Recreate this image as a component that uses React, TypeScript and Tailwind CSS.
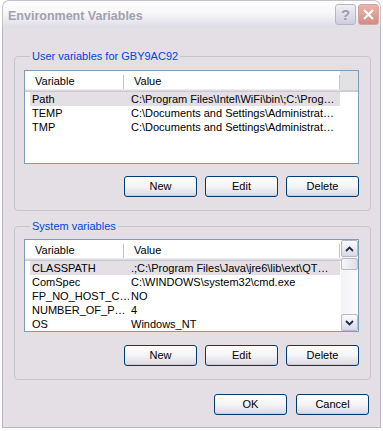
const userVars = [
  { name: "Path", value: "C:\\Program Files\\Intel\\WiFi\\bin\\;C:\\Prog…" },
  { name: "TEMP", value: "C:\\Documents and Settings\\Administrat…" },
  { name: "TMP", value: "C:\\Documents and Settings\\Administrat…" },
];

const systemVars = [
  { name: "CLASSPATH", value: ".;C:\\Program Files\\Java\\jre6\\lib\\ext\\QT…" },
  { name: "ComSpec", value: "C:\\WINDOWS\\system32\\cmd.exe" },
  { name: "FP_NO_HOST_C…", value: "NO" },
  { name: "NUMBER_OF_P…", value: "4" },
  { name: "OS", value: "Windows_NT" },
];

function XpButton({ label }: { label: string }) {
  return (
    <button
      type="button"
      className="h-[21px] w-[73px] rounded-[3px] border border-[#003c74] bg-linear-to-b from-white via-[#f4f3f6] to-[#dcd9e2] text-[11px] leading-none text-black shadow-[inset_0_-1px_0_#cdcad6]"
    >
      {label}
    </button>
  );
}

function Header({ filler }: { filler: boolean }) {
  return (
    <div className="flex h-[21px] items-center bg-white shadow-[inset_0_-1px_0_#cbc8cf,inset_0_-2px_0_#dddae1,inset_0_-3px_0_#eeecf0]">
      <div className="w-[98px] pl-[10px]">Variable</div>
      <div className="h-[14px] w-px bg-[#c6c3cb]" />
      <div className="w-[215px] pl-[10px]">Value</div>
      <div className="h-[14px] w-px bg-[#c6c3cb]" />
      {filler ? (
        <div className="h-full w-[18px] bg-[#e2e1e4] shadow-[inset_0_-2px_0_#cfcdd3]" />
      ) : null}
    </div>
  );
}

function Rows({ items }: { items: { name: string; value: string }[] }) {
  return (
    <div className="flex flex-col">
      {items.map((v, i) => (
        <div
          key={v.name}
          className={
            "ml-[5px] flex h-[14px] w-[310px] items-center whitespace-nowrap " +
            (i === 0 ? "bg-[#e3dfe5]" : "")
          }
        >
          <div className="w-[99px] overflow-hidden pl-[2px]">{v.name}</div>
          <div className="flex-1 overflow-hidden pl-[2px]">{v.value}</div>
        </div>
      ))}
    </div>
  );
}

function Chevron({ up }: { up: boolean }) {
  return (
    <svg width="9" height="6" viewBox="0 0 9 6">
      <path
        d={up ? "M1 5 L4.5 1.5 L8 5" : "M1 1 L4.5 4.5 L8 1"}
        fill="none"
        stroke="#1d2b4a"
        strokeWidth="1.8"
      />
    </svg>
  );
}

function ScrollButton({ up }: { up: boolean }) {
  return (
    <div className="flex h-[17px] w-[17px] items-center justify-center rounded-[2px] border border-[#b8b6c9] bg-linear-to-b from-[#fdfdfe] to-[#d9d8e5]">
      <Chevron up={up} />
    </div>
  );
}

function Group({
  label,
  children,
  className,
}: {
  label: string;
  children: React.ReactNode;
  className: string;
}) {
  return (
    <fieldset className={"rounded-[4px] border border-[#c6c3ca] pl-[9px] pr-[11px] pb-[13px] " + className}>
      <legend className="ml-[6px] px-[2px] text-[11px] leading-[13px] text-[#0046d5]">{label}</legend>
      {children}
    </fieldset>
  );
}

export default function App() {
  return (
    <div className="h-[431px] w-[383px] overflow-hidden bg-white font-['Liberation_Sans',Arial,sans-serif] text-[11px] text-black">
      <div className="ml-[2px] flex h-[428px] w-[379px] flex-col">
        <div className="flex h-[27px] shrink-0 items-center rounded-t-[7px] border border-b-0 border-[#c4c3cd] bg-linear-to-b from-white via-[#f6f6f8] to-[#dedde7] pl-[5px] pr-[1px]">
          <span className="flex-1 pt-[4px] text-[12.5px] font-bold text-[#a2a1af]">Environment Variables</span>
          <div className="flex h-[21px] w-[21px] items-center justify-center rounded-[3px] border border-[#b7b5c8] bg-linear-to-b from-[#f1f0f6] to-[#cfcddd] text-[15px] font-bold leading-none text-[#9f9db2]">
            ?
          </div>
          <div className="ml-[2px] flex h-[21px] w-[21px] items-center justify-center rounded-[3px] border border-[#d8a39c] bg-linear-to-b from-[#eab6ae] to-[#d48b82]">
            <svg width="13" height="13" viewBox="0 0 13 13">
              <path d="M2 2 L11 11 M11 2 L2 11" stroke="white" strokeWidth="2.2" />
            </svg>
          </div>
        </div>

        <div className="flex flex-1 flex-col border-x border-b border-[#b9b7c3] bg-[#e3dfe5] pl-[11px] pr-[9px]">
          <Group label="User variables for GBY9AC92" className="mt-[23px]">
            <div className="mt-[7px] h-[94px] border border-[#7f9db9] bg-white">
              <Header filler />
              <Rows items={userVars} />
            </div>
            <div className="mt-[12px] flex justify-end gap-[8px]">
              <XpButton label="New" />
              <XpButton label="Edit" />
              <XpButton label="Delete" />
            </div>
          </Group>

          <Group label="System variables" className="mt-[9px]">
            <div className="mt-[6px] flex h-[93px] border border-[#7f9db9] bg-white">
              <div className="flex-1">
                <Header filler={false} />
                <Rows items={systemVars} />
              </div>
              <div className="flex w-[17px] flex-col bg-linear-to-r from-[#f3f2f7] to-[#fbfbfd]">
                <ScrollButton up />
                <div className="mt-[1px] h-[12px] w-[17px] rounded-[2px] border border-[#b8b6c9] bg-linear-to-r from-[#f6f6fa] to-[#e0dfea]" />
                <div className="flex-1" />
                <ScrollButton up={false} />
              </div>
            </div>
            <div className="mt-[13px] flex justify-end gap-[8px]">
              <XpButton label="New" />
              <XpButton label="Edit" />
              <XpButton label="Delete" />
            </div>
          </Group>

          <div className="mr-[2px] mt-[14px] flex justify-end gap-[9px]">
            <XpButton label="OK" />
            <XpButton label="Cancel" />
          </div>
        </div>
      </div>
    </div>
  );
}
